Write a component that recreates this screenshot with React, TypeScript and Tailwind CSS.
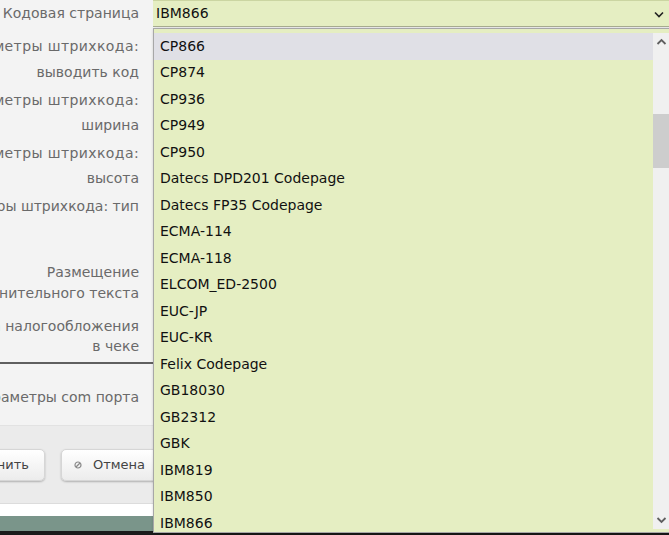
import React from "react";

const items = [
  "CP866",
  "CP874",
  "CP936",
  "CP949",
  "CP950",
  "Datecs DPD201 Codepage",
  "Datecs FP35 Codepage",
  "ECMA-114",
  "ECMA-118",
  "ELCOM_ED-2500",
  "EUC-JP",
  "EUC-KR",
  "Felix Codepage",
  "GB18030",
  "GB2312",
  "GBK",
  "IBM819",
  "IBM850",
  "IBM866",
];

function Line({ children }: { children: React.ReactNode }) {
  return <div className="flex justify-end whitespace-nowrap">{children}</div>;
}

export default function App() {
  return (
    <div className="relative w-[669px] h-[535px] overflow-hidden bg-[#f3f3f3] font-['DejaVu_Sans',sans-serif] text-[14px] text-[#6a6a6a]">
      <div className="flex flex-col h-full">
        <div className="flex h-[27px]">
          <div className="w-[139px] flex items-center justify-end whitespace-nowrap">Кодовая страница</div>
          <div className="ml-[14px] flex-1 flex items-center justify-between bg-[#e5eec2] border-t border-[#cbd5a2] border-b border-b-[#a9ae92] pl-[3px] pr-[5px] text-[#111]">
            <span>IBM866</span>
            <svg width="10" height="7" viewBox="0 0 10 7" className="mt-[1px]">
              <path d="M1 1.5 L5 5.5 L9 1.5" fill="none" stroke="#222" strokeWidth="1.6" />
            </svg>
          </div>
        </div>
        <div className="w-[139px] pt-[6px] leading-[26px]">
          <Line><span className="tracking-[0.4px]">Параметры штрихкода:</span></Line>
          <Line>выводить код</Line>
        </div>
        <div className="w-[139px] mt-[3px] leading-[25px]">
          <Line><span className="tracking-[0.4px]">Параметры штрихкода:</span></Line>
          <Line>ширина</Line>
        </div>
        <div className="w-[139px] mt-[3px] leading-[25px]">
          <Line><span className="tracking-[0.4px]">Параметры штрихкода:</span></Line>
          <Line>высота</Line>
        </div>
        <div className="w-[139px] mt-[3px] leading-[25px]">
          <Line>Параметры штрихкода: тип</Line>
        </div>
        <div className="w-[139px] mt-[43px] leading-[21px]">
          <Line>Размещение</Line>
          <Line>дополнительного текста</Line>
        </div>
        <div className="w-[139px] mt-[12px] leading-[20px]">
          <Line>Система налогообложения</Line>
          <Line>в чеке</Line>
        </div>
        <div className="mt-[6px] h-[2px] w-[160px] bg-[#5f5f5f]" />
        <div className="w-[139px] mt-[23px] leading-[20px]">
          <Line>Параметры com порта</Line>
        </div>
        <div className="mt-[18px] h-[78px] bg-[#ebebeb] border-t border-[#e2e2e2] flex items-start pt-[23px] gap-[16px]">
          <div className="w-[45px] flex justify-end">
            <button className="shrink-0 h-[32px] flex items-center gap-[10px] pl-[12px] pr-[15px] rounded-[5px] border border-[#d6d6d6] bg-gradient-to-b from-white to-[#ececec] shadow-[0_1px_2px_rgba(0,0,0,0.25)] text-[13px] text-[#444] whitespace-nowrap">
              <span>✓</span>
              <span>Сохранить</span>
            </button>
          </div>
          <button className="shrink-0 h-[32px] flex items-center gap-[11px] pl-[12px] pr-[14px] rounded-[5px] border border-[#d6d6d6] bg-gradient-to-b from-white to-[#ececec] shadow-[0_1px_2px_rgba(0,0,0,0.25)] text-[13px] text-[#444] whitespace-nowrap">
            <svg width="8" height="8" viewBox="0 0 8 8">
              <circle cx="4" cy="4" r="3" fill="none" stroke="#8a8a8a" strokeWidth="1.2" />
              <path d="M2 6 L6 2" stroke="#8a8a8a" strokeWidth="1.2" />
            </svg>
            <span>Отмена</span>
          </button>
        </div>
        <div className="h-[13px] bg-white border-t border-[#dcdcdc]" />
        <div className="h-[15px] bg-[#7a958a]" />
        <div className="flex-1 bg-[#1b1b1b]" />
      </div>

      <div className="absolute left-[153px] top-[28px] w-[518px] h-[505px] bg-[#e5eec2] border border-[#a7a7a7] shadow-[1px_1px_3px_rgba(0,0,0,0.3)] text-[#111]">
        <div className="pt-[4px] pr-[17px] h-full overflow-hidden">
          {items.map((it, i) => (
            <div
              key={i}
              className={`h-[26.5px] flex items-center pl-[6px] whitespace-nowrap ${i === 0 ? "bg-[#e0e0e6]" : ""}`}
            >
              {it}
            </div>
          ))}
        </div>
        <div className="absolute right-0 top-[4px] bottom-[3px] w-[17px] bg-[#f0f0f0]">
          <svg width="17" height="14" viewBox="0 0 17 14" className="absolute top-[2px] left-0">
            <path d="M4.5 9 L8.5 5 L12.5 9" fill="none" stroke="#606060" strokeWidth="1.8" />
          </svg>
          <div className="absolute left-0 right-0 top-[81px] h-[54px] bg-[#cdcdcd]" />
          <svg width="17" height="14" viewBox="0 0 17 14" className="absolute bottom-[2px] left-0">
            <path d="M4.5 5 L8.5 9 L12.5 5" fill="none" stroke="#606060" strokeWidth="1.8" />
          </svg>
        </div>
      </div>
    </div>
  );
}
